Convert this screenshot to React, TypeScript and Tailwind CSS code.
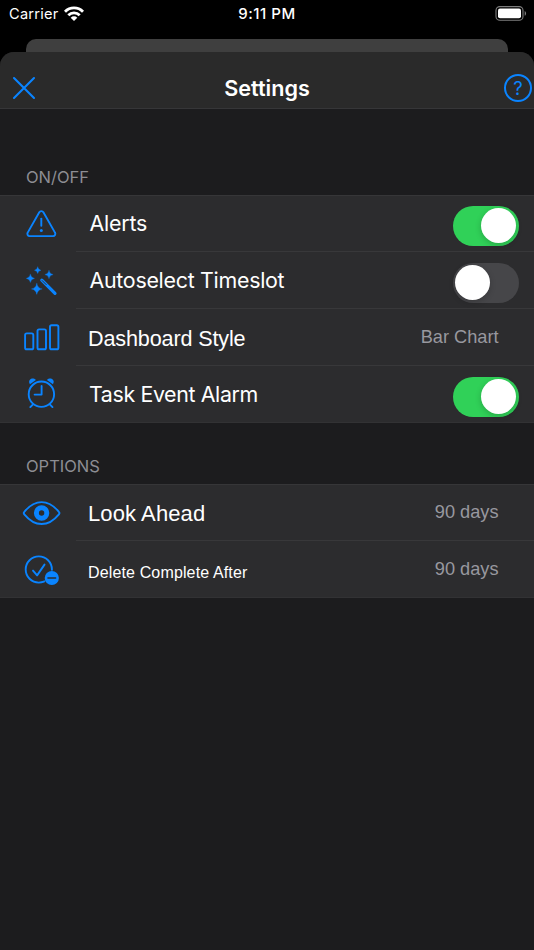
import { useState } from "react";
import type { ReactNode } from "react";
import clsx from "clsx";

const SF = "font-[Inter,'Liberation_Sans',sans-serif]";
const HELVETICA = "font-['Liberation_Sans',Arial,sans-serif]";

// Row icons share one 76x57 box, the area left of the row separator
function RowIcon({ children }: { children: ReactNode }) {
  return (
    <svg
      viewBox="0 0 76 57"
      className="h-[57px] w-[76px] shrink-0"
      fill="none"
      stroke="#0a84ff"
      strokeWidth="1.9"
      strokeLinecap="round"
      strokeLinejoin="round"
    >
      {children}
    </svg>
  );
}

function AlertIcon() {
  return (
    <RowIcon>
      <path d="M39.3 17.3a2.35 2.35 0 0 1 4.1 0L55 37.6a2.3 2.3 0 0 1-2 3.5H29.7a2.3 2.3 0 0 1-2-3.5z" />
      <path d="M41.3 23.6v7.2" />
      <circle cx="41.3" cy="35.4" r="1.5" fill="#0a84ff" stroke="none" />
    </RowIcon>
  );
}

function WandIcon() {
  return (
    <RowIcon>
      <g fill="#0a84ff" stroke="#0a84ff" strokeWidth="0.3">
        <path d="M37.7 15q.5 2.8 3.2 3.3-2.7.5-3.2 3.3-.5-2.8-3.2-3.3 2.7-.5 3.2-3.3z" />
        <path d="M49 18.5q.6 3.5 4.1 4.1-3.5.6-4.1 4.1-.6-3.5-4.1-4.1 3.5-.6 4.1-4.1z" />
        <path d="M30.4 22.3q.6 3.5 4.1 4.1-3.5.6-4.1 4.1-.6-3.5-4.1-4.1 3.5-.6 4.1-4.1z" />
        <path d="M36.8 31.4q.9 4.8 5.4 5.5-4.5.7-5.4 5.5-.9-4.8-5.4-5.5 4.5-.7 5.4-5.5z" />
      </g>
      <path d="M41.8 28.2 55 41.3" strokeWidth="3.2" />
      <path d="m42.2 28.6 4 4" stroke="#2c2c2e" strokeWidth="0.9" />
    </RowIcon>
  );
}

function BarsIcon() {
  return (
    <RowIcon>
      <rect x="25.1" y="24.4" width="8.2" height="15.9" rx="1.6" />
      <rect x="37.5" y="20.4" width="8.5" height="19.9" rx="1.6" />
      <rect x="50" y="16.2" width="8.4" height="24.1" rx="1.6" />
    </RowIcon>
  );
}

function AlarmIcon() {
  return (
    <RowIcon>
      <circle cx="41.4" cy="28.2" r="12.7" />
      <path d="M41.6 20v8.6h-7M33 38.3l-2.7 2.8M49.8 38.3l2.7 2.8" />
      <g fill="#0a84ff" stroke="none">
        <path d="M29.9 18.3c-2.8-4.3 2.5-7.7 6-4.3z" />
        <path d="M52.9 18.3c2.8-4.3-2.5-7.7-6-4.3z" />
      </g>
    </RowIcon>
  );
}

function EyeIcon() {
  return (
    <RowIcon>
      <path d="M24.3 30.3c-.7-.8-.7-1.7 0-2.5C28.6 22.6 34.7 18.1 41.6 18.1s13 4.5 17.3 9.7c.7.8.7 1.7 0 2.5-4.3 5.2-10.4 9.7-17.3 9.7s-13-4.5-17.3-9.7z" />
      <circle cx="41.6" cy="29" r="5.2" strokeWidth="5" />
    </RowIcon>
  );
}

function CheckMinusIcon() {
  return (
    <RowIcon>
      <circle cx="38.8" cy="28.5" r="13.1" />
      <path d="m33 29.6 4.1 4.8 7.4-10.8" />
      <circle cx="51.8" cy="37" r="7.6" fill="#2c2c2e" stroke="none" />
      <circle cx="51.8" cy="37" r="7.1" fill="#0a84ff" stroke="none" />
      <path d="M48 37h7.6" stroke="#2c2c2e" strokeWidth="1.6" />
    </RowIcon>
  );
}

function Toggle({ label, defaultOn }: { label: string; defaultOn: boolean }) {
  const [on, setOn] = useState(defaultOn);
  return (
    <button
      type="button"
      role="switch"
      aria-label={label}
      aria-checked={on}
      onClick={() => setOn(!on)}
      className={clsx(
        "mt-[5px] mr-[15.5px] flex h-10 w-[66px] shrink-0 items-center rounded-full px-[2.5px]",
        on ? "justify-end bg-[#30d158]" : "justify-start bg-[#464649]"
      )}
    >
      <span className="h-[35px] w-[35px] rounded-full bg-white shadow-[0_2px_6px_rgba(0,0,0,0.2)]" />
    </button>
  );
}

interface RowProps {
  icon: ReactNode;
  label: string;
  labelClass: string;
  last?: boolean;
  children: ReactNode;
}

function Row({ icon, label, labelClass, last, children }: RowProps) {
  return (
    <li className="flex h-[57px] last:h-[56px]">
      {icon}
      <div
        className={clsx(
          "flex h-full flex-1 items-center justify-between whitespace-nowrap",
          !last && "border-b border-[#38383a]"
        )}
      >
        <span className={clsx("text-white", labelClass)}>{label}</span>
        {children}
      </div>
    </li>
  );
}

function Value({ children }: { children: ReactNode }) {
  return (
    <span className={clsx(HELVETICA, "pr-[35.5px] text-[18.2px] leading-6 text-[#98989f]")}>{children}</span>
  );
}

function StatusBar() {
  return (
    <div className={clsx(SF, "grid h-[39px] grid-cols-3 items-start pt-[4px] text-white")}>
      <div className="flex items-center pl-[9px]">
        <span className="text-[14.6px] leading-5 tracking-[0.25px]">Carrier</span>
        <svg viewBox="0 0 20 15" className="-mt-[2px] ml-[5px] h-[15px] w-5" fill="none" stroke="white" strokeWidth="2.8">
          <path d="M1 5.7a12.6 12.6 0 0 1 18 0" />
          <path d="M4.3 9.2a8 8 0 0 1 11.4 0" />
          <path d="M10 15 6.7 11.7a4.6 4.6 0 0 1 6.6 0z" fill="white" stroke="none" />
        </svg>
      </div>
      <span className="text-center text-[15px] leading-5 font-medium tracking-[0.5px]">9:11 PM</span>
      <svg viewBox="0 0 32 15" className="mt-[2px] mr-[7px] h-[15px] w-8 justify-self-end" fill="none">
        <rect x="1" y="0.6" width="27" height="13.6" rx="3.8" stroke="#7d7d7d" strokeWidth="1.1" />
        <rect x="3" y="2.5" width="23" height="9.8" rx="2" fill="white" />
        <path d="M29.7 5c1.8.7 1.8 4.1 0 4.8z" fill="#7d7d7d" />
      </svg>
    </div>
  );
}

export default function App() {
  return (
    <div className="flex h-[950px] w-[534px] flex-col overflow-hidden bg-black">
      <StatusBar />
      <div className="mx-[26px] h-[13px] shrink-0 rounded-t-[10px] bg-[#3f3f3f]" />

      <div className="flex-1 overflow-hidden rounded-t-[14px] bg-[#1c1c1e]">
        <header className="flex h-[57px] items-center justify-between border-b border-[#363638] bg-[#2a2a2a] pt-[16px] pr-[2px] pl-[12px]">
          <button type="button" aria-label="Close">
            <svg viewBox="0 0 24 24" className="h-6 w-6" stroke="#0a84ff" strokeWidth="2.1" strokeLinecap="round">
              <path d="m2 2 20 20M22 2 2 22" />
            </svg>
          </button>
          <h1 className={clsx(SF, "pr-[6px] text-[21.6px] leading-7 font-semibold text-white")}>Settings</h1>
          <button
            type="button"
            aria-label="Help"
            className={clsx(
              SF,
              "flex h-7 w-7 items-center justify-center rounded-full border-2 border-[#0a84ff] pt-px text-[18.5px] leading-none text-[#0a84ff]"
            )}
          >
            ?
          </button>
        </header>

        <h2 className={clsx(SF, "flex h-[86px] items-end pb-[8px] pl-[26px] text-[16.5px] leading-5 text-[#8d8d93]")}>
          ON/OFF
        </h2>
        <ul className="bg-[#2c2c2e] shadow-[inset_0_1px_#363638,0_1px_#323234]">
          <Row
            icon={<AlertIcon />}
            label="Alerts"
            labelClass={clsx(SF, "pt-[1px] pl-[13.5px] text-[21.4px] tracking-[-0.2px]")}
          >
            <Toggle label="Alerts" defaultOn />
          </Row>
          <Row
            icon={<WandIcon />}
            label="Autoselect Timeslot"
            labelClass={clsx(SF, "pl-[13.5px] text-[21.4px] tracking-[-0.28px]")}
          >
            <Toggle label="Autoselect Timeslot" defaultOn={false} />
          </Row>
          <Row
            icon={<BarsIcon />}
            label="Dashboard Style"
            labelClass={clsx(HELVETICA, "pt-[4px] pl-[12px] text-[21.6px] tracking-[-0.15px]")}
          >
            <Value>Bar Chart</Value>
          </Row>
          <Row
            icon={<AlarmIcon />}
            label="Task Event Alarm"
            labelClass={clsx(SF, "pl-[13px] text-[21.4px] tracking-[-0.38px]")}
            last
          >
            <Toggle label="Task Event Alarm" defaultOn />
          </Row>
        </ul>

        <h2 className={clsx(SF, "flex h-[62px] items-end pb-[8px] pl-[26px] text-[16.5px] leading-5 text-[#8d8d93]")}>
          OPTIONS
        </h2>
        <ul className="bg-[#2c2c2e] shadow-[inset_0_1px_#363638,0_1px_#323234]">
          <Row
            icon={<EyeIcon />}
            label="Look Ahead"
            labelClass={clsx(HELVETICA, "pt-[2px] pl-[12px] text-[22px] tracking-[0.1px]")}
          >
            <Value>90 days</Value>
          </Row>
          <Row
            icon={<CheckMinusIcon />}
            label="Delete Complete After"
            labelClass={clsx(HELVETICA, "pt-[8px] pl-[12px] text-[16px] tracking-[0.14px]")}
            last
          >
            <Value>90 days</Value>
          </Row>
        </ul>
      </div>
    </div>
  );
}
